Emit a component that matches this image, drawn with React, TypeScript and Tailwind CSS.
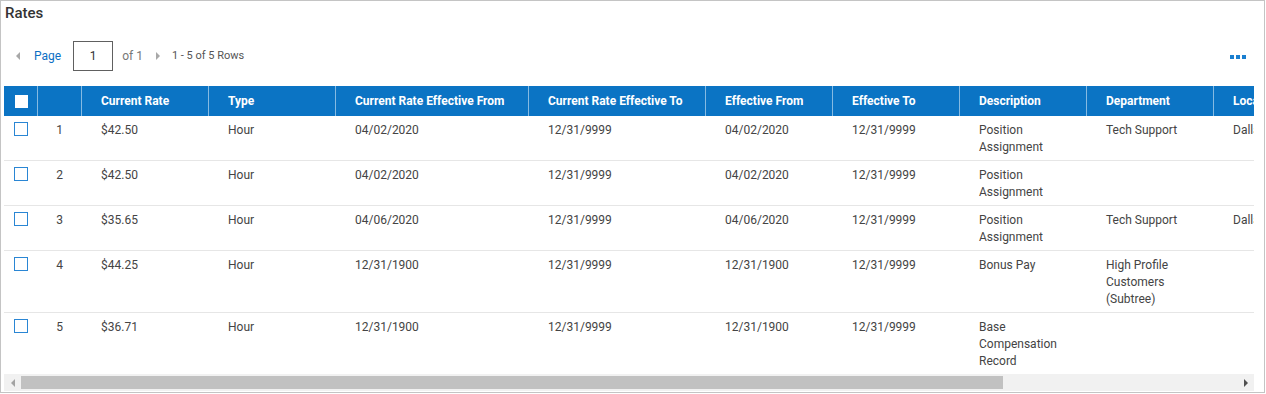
import React from "react";

const cols = "grid-cols-[33px_44px_127px_127px_193px_177px_127px_127px_127px_127px_127px]";

const headers = [
  "Current Rate",
  "Type",
  "Current Rate Effective From",
  "Current Rate Effective To",
  "Effective From",
  "Effective To",
  "Description",
  "Department",
  "Location",
];

const rows: string[][] = [
  ["$42.50", "Hour", "04/02/2020", "12/31/9999", "04/02/2020", "12/31/9999", "Position Assignment", "Tech Support", "Dallas"],
  ["$42.50", "Hour", "04/02/2020", "12/31/9999", "04/02/2020", "12/31/9999", "Position Assignment", "", ""],
  ["$35.65", "Hour", "04/06/2020", "12/31/9999", "04/06/2020", "12/31/9999", "Position Assignment", "Tech Support", "Dallas"],
  ["$44.25", "Hour", "12/31/1900", "12/31/9999", "12/31/1900", "12/31/9999", "Bonus Pay", "High Profile Customers (Subtree)", ""],
  ["$36.71", "Hour", "12/31/1900", "12/31/9999", "12/31/1900", "12/31/9999", "Base Compensation Record", "", ""],
];

export default function App() {
  return (
    <div
      className="w-[1265px] h-[393px] border border-[#c4c4c4] bg-white flex flex-col pl-[3px] pr-[10px] text-[#444]"
      style={{ fontFamily: "Roboto, 'Liberation Sans', sans-serif" }}
    >
      {/* Title */}
      <div className="h-[40px] pl-[1px] pt-[3px] text-[15px] leading-[18px] font-medium text-[#333]">Rates</div>

      {/* Pagination */}
      <div className="h-[30px] flex items-center">
        <span className="ml-[12px] w-0 h-0 border-y-[4px] border-y-transparent border-r-[4px] border-r-[#a8a8a8]" />
        <span className="ml-[14px] text-[12px] text-[#0b6fc4]">Page</span>
        <div className="ml-[12px] w-[40px] h-[30px] border border-[#606060] flex items-center justify-center text-[12px] text-[#333]">
          1
        </div>
        <span className="ml-[9px] text-[12px] text-[#777]">of 1</span>
        <span className="ml-[13px] w-0 h-0 border-y-[4px] border-y-transparent border-l-[4px] border-l-[#a8a8a8]" />
        <span className="ml-[12px] text-[11px] text-[#555]">1 - 5 of 5 Rows</span>
        <div className="ml-auto mr-[8px] flex gap-[2px] mt-[2px]">
          <span className="w-[4px] h-[4px] bg-[#1a7fd0]" />
          <span className="w-[4px] h-[4px] bg-[#1a7fd0]" />
          <span className="w-[4px] h-[4px] bg-[#1a7fd0]" />
        </div>
      </div>

      {/* Table viewport */}
      <div className="mt-[15px] h-[288px] w-[1250px] overflow-hidden">
        <div className="w-[1336px]">
          <div className={`grid ${cols} h-[30px] bg-[#0b74c4] text-white text-[12px] font-bold`}>
            <div className="flex items-center pl-[11px]">
              <span className="w-[13px] h-[13px] bg-white" />
            </div>
            <div className="border-l border-white/50" />
            {headers.map((h) => (
              <div key={h} className="border-l border-white/50 flex items-center pl-[19px] whitespace-nowrap">
                {h}
              </div>
            ))}
          </div>
          {rows.map((r, i) => (
            <div key={i} className={`grid ${cols} border-b border-[#e6e6e6] text-[12px] leading-[17px]`}>
              <div className="pl-[10px] pt-[6px] pb-[4px]">
                <span className="block w-[14px] h-[14px] border border-[#2a86d4]" />
              </div>
              <div className="pt-[6px] pb-[4px] pl-[1px] text-center">{i + 1}</div>
              {r.map((c, j) => (
                <div key={j} className="pl-[20px] pr-[22px] pt-[6px] pb-[4px]">
                  {c}
                </div>
              ))}
            </div>
          ))}
        </div>
      </div>

      {/* Scrollbar */}
      <div className="h-[17px] w-[1250px] bg-[#f1f1f1] flex items-center">
        <div className="w-[17px] flex items-center justify-center">
          <span className="w-0 h-0 border-y-[4px] border-y-transparent border-r-[4px] border-r-[#a3a3a3]" />
        </div>
        <div className="w-[982px] h-[13px] bg-[#c1c1c1]" />
        <div className="ml-auto w-[17px] flex items-center justify-center">
          <span className="w-0 h-0 border-y-[4px] border-y-transparent border-l-[4px] border-l-[#505050]" />
        </div>
      </div>
    </div>
  );
}
